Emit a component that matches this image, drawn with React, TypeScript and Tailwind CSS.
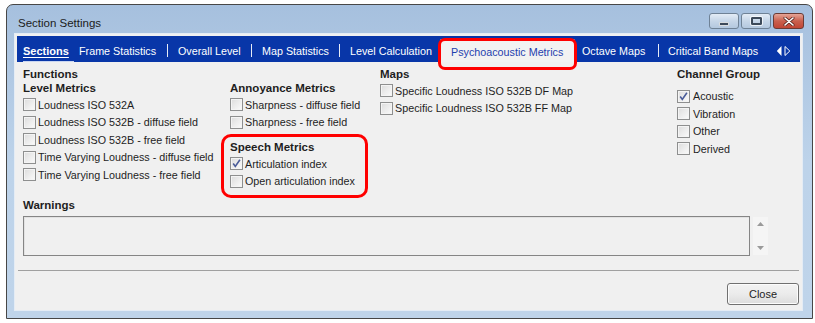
import type { ReactNode } from 'react'

const font = { fontFamily: '"Liberation Sans", Arial, sans-serif' }

function CheckBox({ checked = false }: { checked?: boolean }) {
  return (
    <span className="relative w-[13px] h-[13px] shrink-0 border border-[#8e8f8f] bg-gradient-to-br from-[#dcdcdc] via-[#ececec] to-[#fbfbfb] shadow-[inset_0_0_0_1px_#f4f4f4]">
      {checked && (
        <svg viewBox="0 0 11 11" className="absolute left-0 top-0 w-[11px] h-[11px]">
          <path d="M2.2 5.6 L4.3 8.4 L8.9 1.8" fill="none" stroke="#4a5c99" strokeWidth="1.6" />
        </svg>
      )}
    </span>
  )
}

function Row({ label, checked, gap = 'gap-[2px]' }: { label: string; checked?: boolean; gap?: string }) {
  return (
    <div className={`h-[17.5px] flex items-center ${gap}`}>
      <CheckBox checked={checked} />
      <span className="text-[10.75px] text-[#1e1e1e] whitespace-nowrap">{label}</span>
    </div>
  )
}

function Heading({ children }: { children: ReactNode }) {
  return <div className="h-[14px] flex items-center text-[11.5px] font-bold text-[#1e1e1e] whitespace-nowrap">{children}</div>
}

function Sep() {
  return <span className="w-px h-[13px] mt-[2px] bg-white/90 shrink-0" />
}

function WinButton({ kind }: { kind: 'min' | 'max' | 'close' }) {
  if (kind === 'close') {
    return (
      <div className="w-[31px] h-[16px] rounded-[3px] border border-[#6b3b35] bg-gradient-to-b from-[#e5a497] via-[#c9604e] to-[#c14535] flex items-center justify-center">
        <svg viewBox="0 0 12 9" className="w-[12px] h-[9px]">
          <path d="M2 1 L10 8 M10 1 L2 8" stroke="#5a2620" strokeWidth="3" strokeLinecap="round" />
          <path d="M2 1 L10 8 M10 1 L2 8" stroke="#ffffff" strokeWidth="1.6" strokeLinecap="round" />
        </svg>
      </div>
    )
  }
  return (
    <div className="w-[30px] h-[16px] rounded-[3px] border border-[#6f8296] bg-gradient-to-b from-[#e3ecf6] via-[#c6d6e8] to-[#b4c8df] flex items-center justify-center">
      {kind === 'min' ? (
        <span className="mt-[5px] w-[10px] h-[4px] bg-[#3d4a5a] border border-white/80 rounded-[1px]" />
      ) : (
        <span className="w-[11px] h-[8px] border-[2px] border-[#3d4a5a] outline outline-1 outline-white/70 rounded-[1px]" />
      )}
    </div>
  )
}

export default function App() {
  return (
    <div className="relative w-[815px] h-[323px] bg-white pt-[4px] pl-[6px]" style={font}>
      <div className="w-[807px] h-[315px] rounded-t-[7px] border border-[#474747] bg-gradient-to-b from-[#a6c0de] via-[#bdd3ea] to-[#bfd4ea] flex flex-col">
        {/* title bar */}
        <div className="h-[28px] flex items-start justify-between pl-[11px] pr-[8px]">
          <span className="mt-[10px] text-[11.5px] text-[#1c1c1c]">Section Settings</span>
          <div className="mt-[8px] flex gap-[2px]">
            <WinButton kind="min" />
            <WinButton kind="max" />
            <WinButton kind="close" />
          </div>
        </div>

        {/* client area */}
        <div className="ml-[7px] w-[789px] h-[278px] bg-[#f0f0f0] border border-[#e4ecf5] p-[2px] flex flex-col">
          {/* tab strip */}
          <div className="h-[26px] bg-[#0836a8] flex items-center pl-[6px] text-[10.75px] text-white">
            <span className="w-[56px] h-full flex items-center pt-[4px] relative">
              <span className="font-bold text-[11px] underline underline-offset-2">Sections</span>
              <span className="absolute left-0 bottom-0 w-[51px] h-px bg-[#c9d6f2]" />
            </span>
            <span className="w-[88px] pt-[4px] whitespace-nowrap">Frame Statistics</span>
            <Sep />
            <span className="ml-[10px] w-[73px] pt-[4px] whitespace-nowrap">Overall Level</span>
            <Sep />
            <span className="ml-[10px] w-[77px] pt-[4px] whitespace-nowrap">Map Statistics</span>
            <Sep />
            <span className="ml-[10px] w-[90px] pt-[4px] whitespace-nowrap">Level Calculation</span>
            <span className="self-end w-[135px] h-[23px] bg-[#f2f2f2] rounded-t-[2px] flex items-center pl-[11px] pt-[3px] text-[#1f3fae] whitespace-nowrap">
              Psychoacoustic Metrics
            </span>
            <span className="ml-[7px] w-[76px] pt-[4px] whitespace-nowrap">Octave Maps</span>
            <Sep />
            <span className="ml-[9px] w-[108px] pt-[4px] whitespace-nowrap">Critical Band Maps</span>
            <svg viewBox="0 0 15 12" className="w-[15px] h-[12px] mt-[3px]">
              <path d="M5.5 1 L0.8 6 L5.5 11 Z" fill="#ffffff" />
              <path d="M9 1.5 L13.8 6 L9 10.5 Z" fill="none" stroke="#ffffff" strokeWidth="1" />
            </svg>
          </div>

          {/* settings */}
          <div className="pl-[6px] pt-[6px] flex">
            <div className="w-[207px]">
              <Heading>Functions</Heading>
              <Heading>Level Metrics</Heading>
              <Row label="Loudness ISO 532A" />
              <Row label="Loudness ISO 532B - diffuse field" />
              <Row label="Loudness ISO 532B - free field" />
              <Row label="Time Varying Loudness - diffuse field" />
              <Row label="Time Varying Loudness - free field" />
            </div>
            <div className="w-[150px] pt-[14px]">
              <Heading>Annoyance Metrics</Heading>
              <Row label="Sharpness - diffuse field" />
              <Row label="Sharpness - free field" />
              <div className="mt-[10px]">
                <Heading>Speech Metrics</Heading>
              </div>
              <Row label="Articulation index" checked />
              <Row label="Open articulation index" />
            </div>
            <div className="w-[297px]">
              <Heading>Maps</Heading>
              <Row label="Specific Loudness ISO 532B DF Map" />
              <Row label="Specific Loudness ISO 532B FF Map" />
            </div>
            <div>
              <Heading>Channel Group</Heading>
              <div className="mt-[5.5px]">
                <Row label="Acoustic" checked gap="gap-[3px]" />
                <Row label="Vibration" gap="gap-[3px]" />
                <Row label="Other" gap="gap-[3px]" />
                <Row label="Derived" gap="gap-[3px]" />
              </div>
            </div>
          </div>

          <div className="pl-[6px] mt-[9px]">
            <Heading>Warnings</Heading>
            <div className="mt-[3px] flex">
              <div className="w-[727px] h-[40px] border border-[#858585] bg-[#f0f0f0] shadow-[inset_1px_1px_0_#e2e2e2]" />
              <div className="ml-[3px] w-[15px] h-[38px] mt-px bg-[#f5f5f5] flex flex-col items-center justify-between py-[5px]">
                <svg viewBox="0 0 7 4" className="w-[7px] h-[4px]">
                  <path d="M0 4 L3.5 0 L7 4 Z" fill="#9a9a9a" />
                </svg>
                <svg viewBox="0 0 7 4" className="w-[7px] h-[4px]">
                  <path d="M0 0 L3.5 4 L7 0 Z" fill="#9a9a9a" />
                </svg>
              </div>
            </div>
          </div>

          <div className="mt-[14px] ml-px mr-px h-px bg-[#a0a0a0]" />

          <div className="mt-[12px] flex justify-end pr-px">
            <button className="w-[72px] h-[22px] rounded-[3px] border border-[#707070] bg-gradient-to-b from-[#f3f3f3] via-[#ebebeb] to-[#dcdcdc] shadow-[inset_0_0_0_1px_#fcfcfc] text-[11px] text-[#1e1e1e]">
              Close
            </button>
          </div>
        </div>
      </div>

      {/* red highlight annotations */}
      <div className="absolute left-[438px] top-[38px] w-[139px] h-[32px] border-[3px] border-[#ff0000] rounded-[7px]" />
      <div className="absolute left-[221px] top-[134px] w-[147px] h-[64px] border-[3px] border-[#ff0000] rounded-[10px]" />
    </div>
  )
}
